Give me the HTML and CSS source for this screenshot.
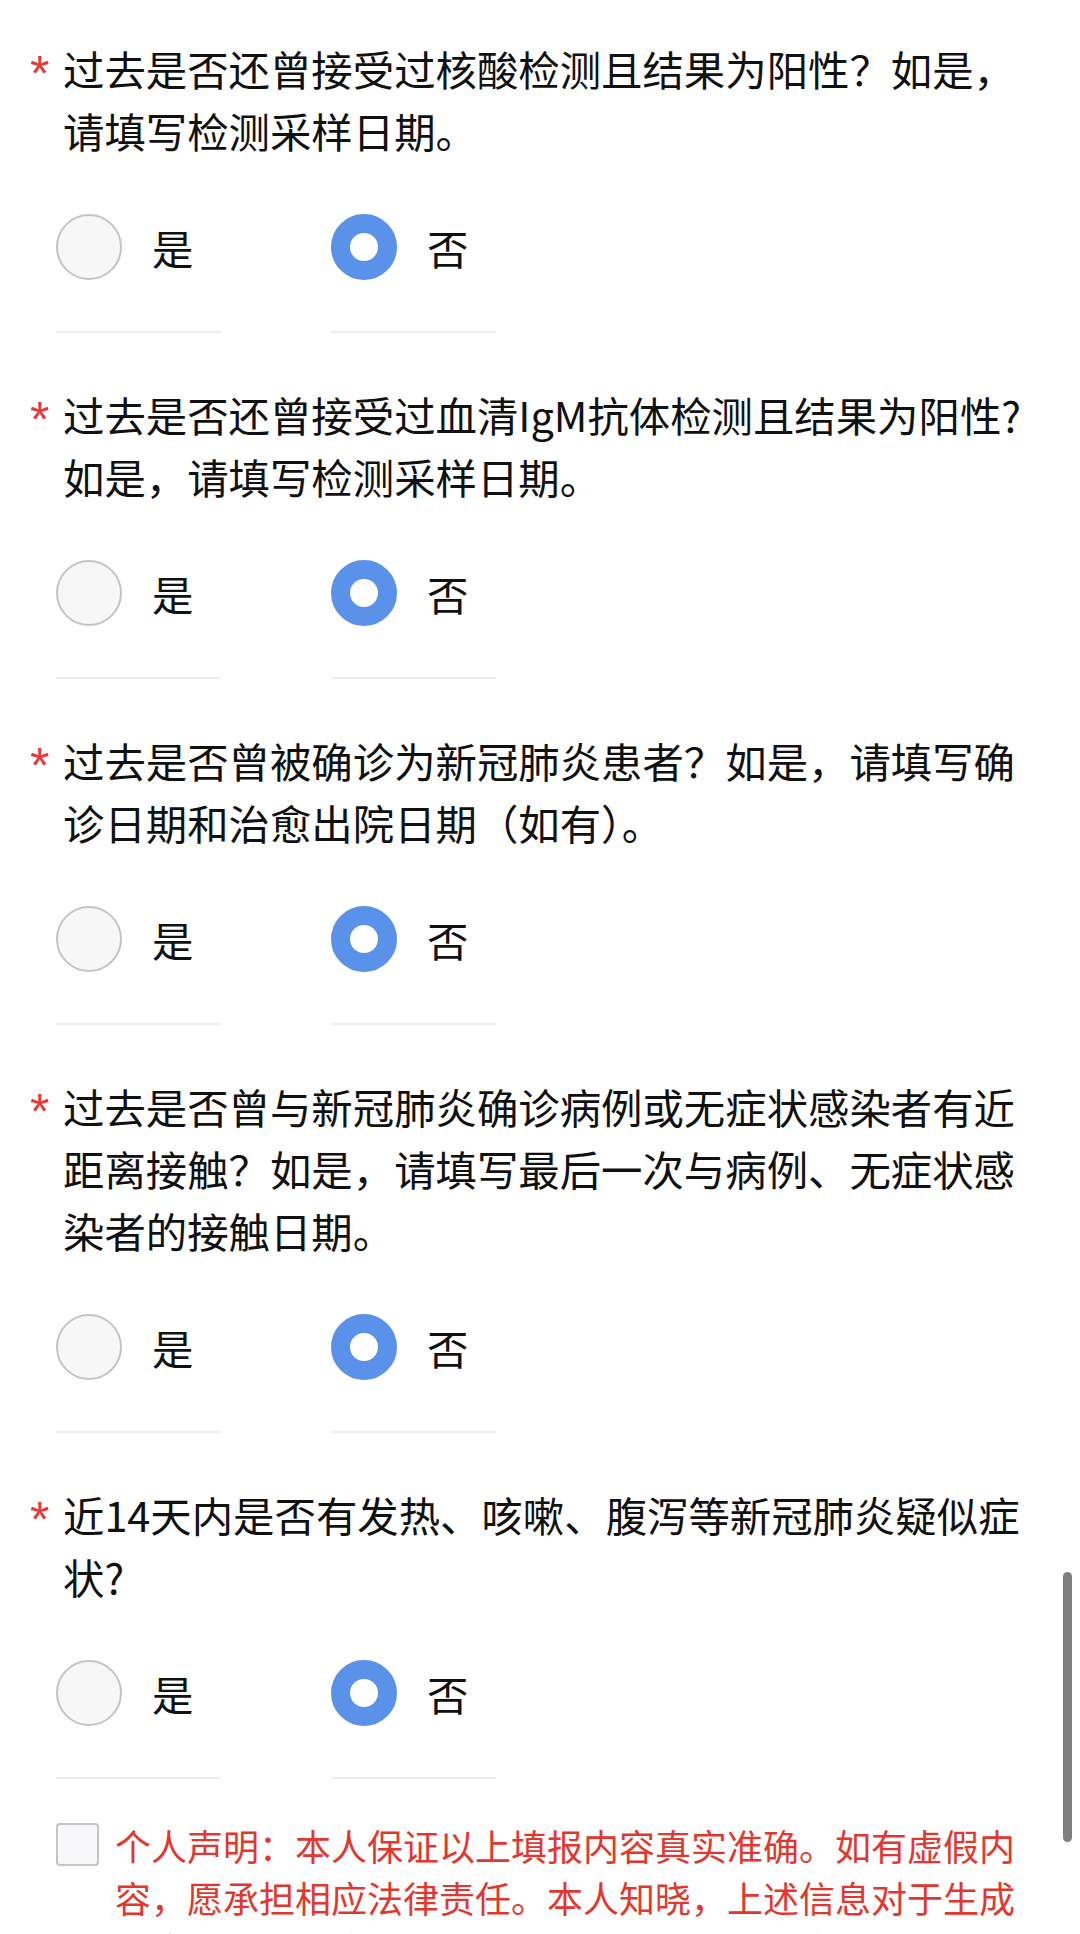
FILE: index.html
```html
<!DOCTYPE html>
<html lang="zh-CN">
  <head>
    <meta charset="UTF-8" />
    <meta name="viewport" content="width=device-width, initial-scale=1.0" />
    <title>健康申报</title>
    <link rel="stylesheet" href="styles.css">
  </head>
  <body>
    <main class="form">
      <section class="question">
        <div class="title">
          <span class="req">*</span>
          <p>过去是否还曾接受过核酸检测且结果为阳性？如是，请填写检测采样日期。</p>
        </div>
        <div class="options">
          <label class="option"><span class="radio"></span>是</label>
          <label class="option"><span class="radio checked"></span>否</label>
        </div>
      </section>

      <section class="question">
        <div class="title">
          <span class="req">*</span>
          <p>过去是否还曾接受过血清IgM抗体检测且结果为阳性?如是，请填写检测采样日期。</p>
        </div>
        <div class="options">
          <label class="option"><span class="radio"></span>是</label>
          <label class="option"><span class="radio checked"></span>否</label>
        </div>
      </section>

      <section class="question">
        <div class="title">
          <span class="req">*</span>
          <p>过去是否曾被确诊为新冠肺炎患者？如是，请填写确诊日期和治愈出院日期（如有）。</p>
        </div>
        <div class="options">
          <label class="option"><span class="radio"></span>是</label>
          <label class="option"><span class="radio checked"></span>否</label>
        </div>
      </section>

      <section class="question">
        <div class="title">
          <span class="req">*</span>
          <p>过去是否曾与新冠肺炎确诊病例或无症状感染者有近距离接触？如是，请填写最后一次与病例、无症状感染者的接触日期。</p>
        </div>
        <div class="options">
          <label class="option"><span class="radio"></span>是</label>
          <label class="option"><span class="radio checked"></span>否</label>
        </div>
      </section>

      <section class="question">
        <div class="title">
          <span class="req">*</span>
          <p>近14天内是否有发热、咳嗽、腹泻等新冠肺炎疑似症状?</p>
        </div>
        <div class="options">
          <label class="option"><span class="radio"></span>是</label>
          <label class="option"><span class="radio checked"></span>否</label>
        </div>
      </section>

      <label class="statement">
        <span class="checkbox"></span>
        <p>个人声明：本人保证以上填报内容真实准确。如有虚假内容，愿承担相应法律责任。本人知晓，上述信息对于生成健康码及后续疫情防控工作至关重要，须如实填报。</p>
      </label>
    </main>
    <div class="scrollbar"></div>
  </body>
</html>
```

FILE: styles.css
```css
body {
  margin: 0;
  background: #fff;
  color: #111;
  font-family: "Noto Sans CJK SC", "Noto Sans", sans-serif;
  font-size: 41.4px;
}

p {
  margin: 0;
}

.form {
  padding: 37px 52px 0 30px;
}

.question {
  margin-bottom: 50px;
}

.title {
  display: flex;
  align-items: flex-start;
  line-height: 62px;
}

.req {
  flex: none;
  width: 33px;
  margin-top: 12px;
  font-family: "Liberation Sans", sans-serif;
  font-size: 50px;
  line-height: 1;
  color: #e8393a;
}

.title p {
  flex: 1;
}

.options {
  display: flex;
  gap: 110px;
  margin: 53px 0 0 26px;
}

.option {
  display: flex;
  align-items: center;
  gap: 30px;
  width: 165px;
  padding-bottom: 51px;
  border-bottom: 2px solid #efefef;
  line-height: 66px;
}

.radio {
  flex: none;
  width: 66px;
  height: 66px;
  box-sizing: border-box;
  border-radius: 50%;
  border: 2px solid #c4c4c4;
  background: #f7f7f7;
}

.radio.checked {
  border: 19px solid #5a92e9;
  background: #fff;
}

.statement {
  display: flex;
  align-items: flex-start;
  gap: 16px;
  margin: -10px 0 0 26px;
  color: #e2372e;
  font-size: 36px;
  line-height: 52px;
}

.checkbox {
  flex: none;
  width: 43px;
  height: 43px;
  margin-top: 4px;
  box-sizing: border-box;
  border: 2px solid #c4c4c4;
  border-radius: 4px;
  background: #f8f8fa;
}

.scrollbar {
  position: fixed;
  top: 1572px;
  right: 8px;
  width: 9px;
  height: 270px;
  border-radius: 5px;
  background: #7f7f7f;
}
```
